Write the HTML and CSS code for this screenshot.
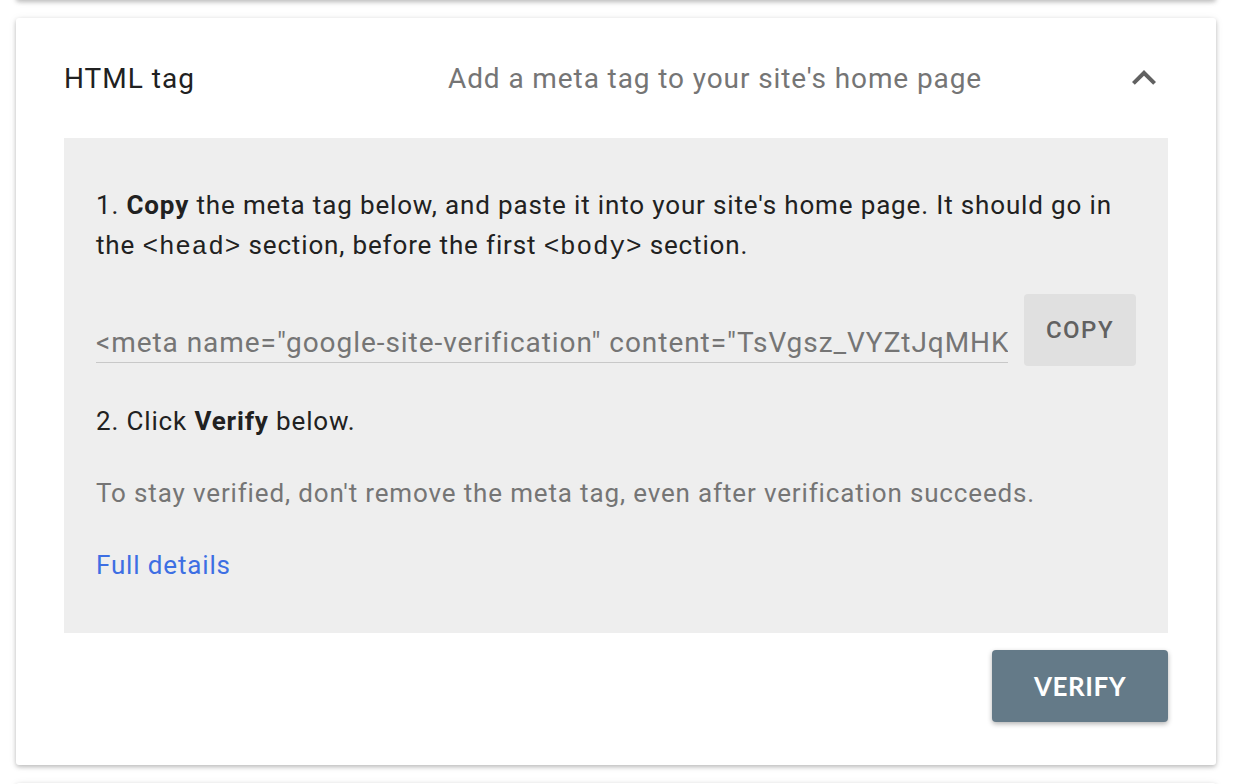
FILE: index.html
```html
<!DOCTYPE html>
<html lang="en">
<head>
    <meta charset="UTF-8">
    <meta name="viewport" content="width=device-width, initial-scale=1.0">
    <title>Verify ownership - HTML tag</title>
    <link rel="stylesheet" href="styles.css">
</head>
<body>
    <div class="page">
        <div class="card card-prev"></div>

        <div class="card method">
            <div class="method-header">
                <div class="method-title">HTML tag</div>
                <div class="method-desc">Add a meta tag to your site's home page</div>
                <button class="toggle" type="button" aria-label="Collapse">
                    <svg viewBox="0 0 24 24" width="48" height="48">
                        <path d="M12 8l-6 6 1.41 1.41L12 10.83l4.59 4.58L18 14z" fill="#616161"/>
                    </svg>
                </button>
            </div>

            <div class="method-body">
                <p class="step">1. <b>Copy</b> the meta tag below, and paste it into your site's home page. It should go in the <code>&lt;head&gt;</code> section, before the first <code>&lt;body&gt;</code> section.</p>

                <div class="copy-row">
                    <input class="tag-field" type="text" readonly value='<meta name="google-site-verification" content="TsVgsz_VYZtJqMHKr2Xw8dL0aQ5nPj3FhYcUeB1mGoI" />'>
                    <button class="copy-btn" type="button">COPY</button>
                </div>

                <p class="step step-2">2. Click <b>Verify</b> below.</p>

                <p class="note">To stay verified, don't remove the meta tag, even after verification succeeds.</p>

                <a class="details" href="#">Full details</a>
            </div>

            <div class="actions">
                <button class="verify-btn" type="button">VERIFY</button>
            </div>
        </div>

        <div class="card card-next"></div>
    </div>
</body>
</html>
```

FILE: styles.css
```css
body {
    margin: 0;
    background-color: #fff;
    font-family: Roboto, "Noto Sans", Arial, sans-serif;
    color: #212121;
    overflow: hidden;
}
.page {
    padding: 0 32px 0 16px;
}
.card {
    background-color: #fff;
    border-radius: 3px;
    box-shadow: 0 2px 4px rgba(0, 0, 0, 0.22), 0 1px 8px rgba(0, 0, 0, 0.08);
}
.card-prev {
    height: 40px;
    margin-top: -40px;
}
.card-next {
    height: 40px;
    margin-top: 18px;
}
.method {
    margin-top: 18px;
    padding: 0 48px 43px;
}
.method-header {
    display: flex;
    align-items: center;
    height: 120px;
}
.method-title {
    width: 384px;
    font-size: 28px;
    letter-spacing: 1px;
    color: #212121;
}
.method-desc {
    flex: 1;
    font-size: 28px;
    letter-spacing: 0.9px;
    color: #757575;
}
.toggle {
    width: 48px;
    height: 48px;
    padding: 0;
    border: none;
    background: none;
    cursor: pointer;
}
.toggle svg {
    display: block;
}
.method-body {
    background-color: #eeeeee;
    padding: 47px 32px 48px;
}
.step {
    margin: 0;
    font-size: 26px;
    line-height: 40px;
    letter-spacing: 0.85px;
    color: #212121;
}
.step b {
    font-weight: 700;
}
.step code {
    font-family: "Liberation Mono", "Courier New", monospace;
    font-size: 26px;
    line-height: 1;
}
.copy-row {
    display: flex;
    align-items: flex-end;
    gap: 16px;
    margin-top: 29px;
}
.tag-field {
    flex: 1;
    min-width: 0;
    height: 40px;
    margin-bottom: 3px;
    padding: 0;
    border: none;
    border-bottom: 1px solid #c8c8c8;
    background: transparent;
    font-family: Roboto, Arial, sans-serif;
    font-size: 28px;
    letter-spacing: 0.95px;
    color: #757575;
    outline: none;
}
.copy-btn {
    width: 112px;
    height: 72px;
    border: none;
    border-radius: 4px;
    background-color: #e0e0e0;
    color: #616161;
    font-family: Roboto, Arial, sans-serif;
    font-size: 24px;
    font-weight: 500;
    letter-spacing: 1.5px;
    cursor: pointer;
}
.step-2 {
    margin-top: 35px;
}
.note {
    margin: 32px 0 0;
    font-size: 26px;
    line-height: 40px;
    letter-spacing: 0.85px;
    color: #757575;
}
.details {
    display: block;
    margin-top: 32px;
    font-size: 26px;
    line-height: 40px;
    letter-spacing: 0.85px;
    color: #3d6fe3;
    text-decoration: none;
}
.actions {
    display: flex;
    justify-content: flex-end;
    margin-top: 17px;
}
.verify-btn {
    width: 176px;
    height: 72px;
    border: none;
    border-radius: 4px;
    background-color: #647a88;
    color: #fff;
    font-family: Lato, Roboto, sans-serif;
    font-size: 26px;
    font-weight: 700;
    letter-spacing: 0.5px;
    box-shadow: 0 2px 5px rgba(0, 0, 0, 0.3);
    cursor: pointer;
}
```
